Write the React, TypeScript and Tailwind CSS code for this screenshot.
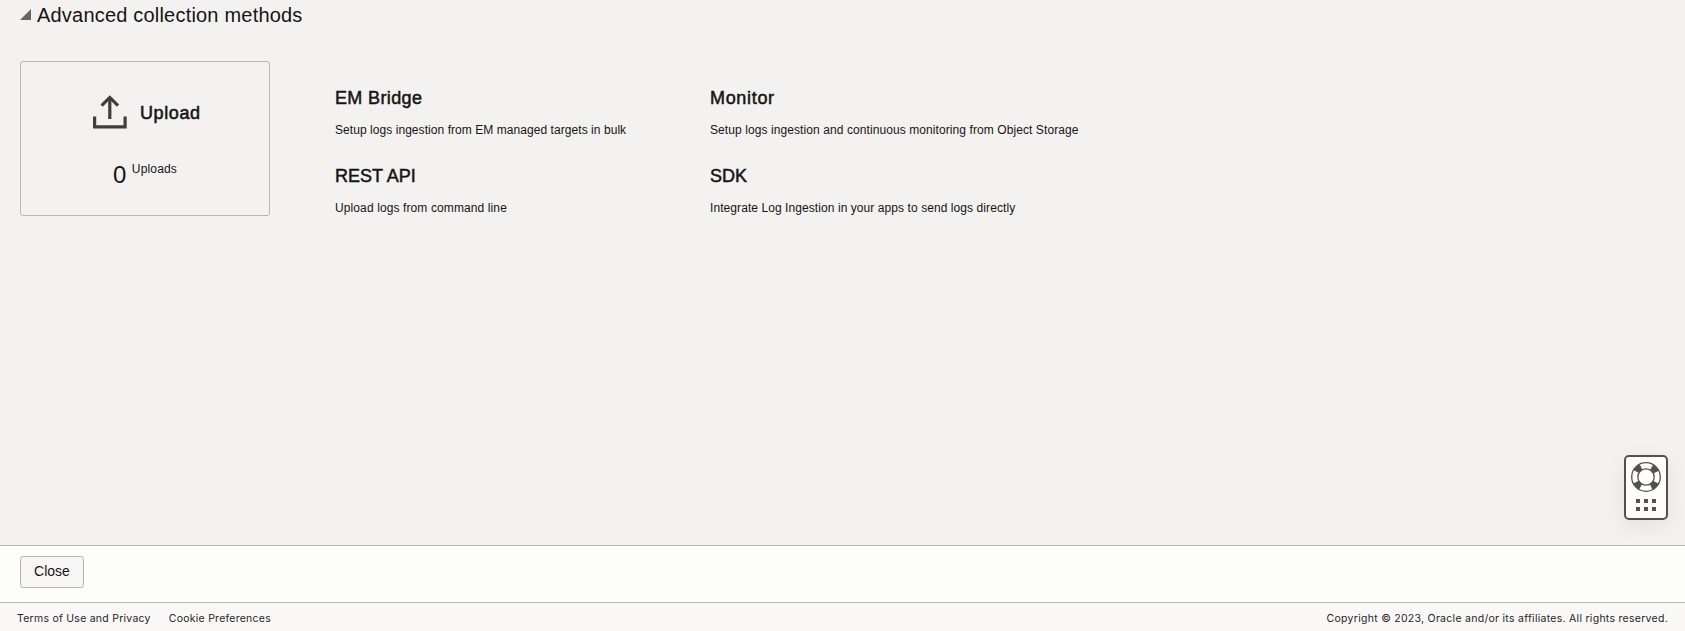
const methods = [
  { title: "EM Bridge", text: "Setup logs ingestion from EM managed targets in bulk", tt: "tracking-[0.36px]", dt: "tracking-[0.058px]" },
  { title: "Monitor", text: "Setup logs ingestion and continuous monitoring from Object Storage", tt: "tracking-[0.68px]", dt: "tracking-[0.085px]" },
  { title: "REST API", text: "Upload logs from command line", tt: "tracking-[0px]", dt: "tracking-[0.11px]" },
  { title: "SDK", text: "Integrate Log Ingestion in your apps to send logs directly", tt: "tracking-[0px]", dt: "tracking-[0.075px]" },
];

function UploadIcon() {
  return (
    <svg width="34" height="34" viewBox="0 0 34 34" fill="none" stroke="#403e3b" strokeWidth="3.2">
      <path d="M1.6 21.5V31.9H32.1V21.5" />
      <path d="M16.8 24V2.5" />
      <path d="M8.6 10.6L16.8 2.4L25 10.6" />
    </svg>
  );
}

function HelpWidget() {
  return (
    <div className="absolute right-[17px] bottom-[111px] h-[65px] w-[44px] rounded-[5px] border-2 border-[#55504c] bg-[#fdfdfb] shadow-[0_6px_20px_rgba(0,0,0,0.07)]">
      <svg className="block" width="40" height="61" viewBox="1626 457 40 61">
        <circle cx="1646" cy="477" r="14.3" fill="none" stroke="#55504c" strokeWidth="1.3" />
        <circle cx="1646" cy="477" r="11.2" fill="none" stroke="#55504c" strokeWidth="6.2" strokeDasharray="6.6 10.993" strokeDashoffset="-5.5" />
        <circle cx="1646" cy="477" r="8.2" fill="#fdfdfb" stroke="#55504c" strokeWidth="1.3" />
        {[1636, 1644, 1652].map((x) => (
          <g key={x} fill="#55504c">
            <rect x={x} y="499" width="4" height="4" />
            <rect x={x} y="507" width="4" height="4" />
          </g>
        ))}
      </svg>
    </div>
  );
}

export default function App() {
  return (
    <div className="relative flex h-[631px] flex-col overflow-hidden bg-[#f3f2f0] font-['Liberation_Sans',Arial,sans-serif] text-[#161513]">
      <main className="flex-1 px-5 pt-px">
        <h1 className="flex items-start text-[20px] leading-7 tracking-[0.2px]">
          <svg className="mt-2 mr-[6px]" width="11" height="11" viewBox="0 0 11 11">
            <path d="M0 11H11V0Z" fill="#6b6560" />
          </svg>
          <span>Advanced collection methods</span>
        </h1>
        <div className="mt-8 flex">
          <section className="h-[155px] w-[250px] rounded-[3px] border border-[#bcb6b1] pt-[33px]">
            <div className="flex pl-[72px]">
              <UploadIcon />
              <span className="mt-[6px] ml-[13px] text-[18px] leading-6 tracking-[0.6px] [-webkit-text-stroke:0.55px_#161513]">Upload</span>
            </div>
            <div className="mt-8 flex pl-[92px]">
              <span className="text-[24px] leading-7">0</span>
              <span className="ml-[5.5px] text-[12px] leading-4 tracking-[0.15px]">Uploads</span>
            </div>
          </section>
          <section className="ml-[65px] grid grid-cols-[375px_auto] content-start gap-y-[26px] pt-[25px]">
            {methods.map((m) => (
              <div key={m.title}>
                <h2 className={`text-[18px] leading-6 [-webkit-text-stroke:0.5px_#161513] ${m.tt}`}>{m.title}</h2>
                <p className={`mt-3 text-[12px] leading-4 whitespace-nowrap ${m.dt}`}>{m.text}</p>
              </div>
            ))}
          </section>
        </div>
      </main>
      <div className="h-[57px] border-t border-[#bcb6b1] bg-[#fdfdfb] px-5 pt-[10px]">
        <button className="block h-8 w-16 rounded-[3px] border border-[#bcb6b1] bg-[#f7f6f5] pb-[2px] text-[14px] leading-7">Close</button>
      </div>
      <footer className="flex h-[29px] justify-between border-t border-[#bcb6b1] bg-[#faf9f8] pr-[17px] pl-[17px] pt-2 font-[Inter,sans-serif] text-[10.5px] leading-4 text-[#262422]">
        <div className="flex gap-[18px] tracking-[0.25px]">
          <span>Terms of Use and Privacy</span>
          <span>Cookie Preferences</span>
        </div>
        <span className="tracking-[0.278px]">Copyright © 2023, Oracle and/or its affiliates. All rights reserved.</span>
      </footer>
      <HelpWidget />
    </div>
  );
}
